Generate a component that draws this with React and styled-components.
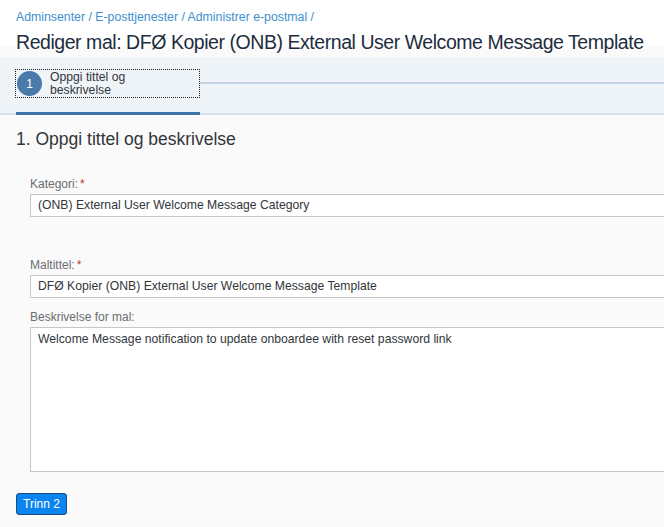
import React from 'react';
import styled, { createGlobalStyle } from 'styled-components';

const GlobalStyle = createGlobalStyle`
  html, body {
    margin: 0;
    padding: 0;
    background: #fafafa;
    font-family: "Liberation Sans", Arial, sans-serif;
    overflow: hidden;
  }
`;

const Page = styled.div`
  width: 664px;
  height: 527px;
  background: #fafafa;
  overflow: hidden;
`;

const Header = styled.header`
  background: #ffffff;
  padding: 10px 0 0 16px;
  height: 47px;
  box-sizing: border-box;
`;

const Breadcrumb = styled.div`
  font-size: 12.3px;
  line-height: 14px;
  color: #3d8fd0;
  white-space: nowrap;
`;

const Title = styled.h1`
  margin: 6px 0 0;
  font-size: 19.5px;
  letter-spacing: -0.45px;
  font-weight: normal;
  line-height: 24px;
  color: #1d2d3e;
  white-space: nowrap;
`;

const WizardBand = styled.div`
  background: #eff4f9;
  height: 58px;
  margin-top: 10px;
  position: relative;
  border-bottom: 2px solid #d4e1ee;
  box-sizing: border-box;
`;

const StepRow = styled.div`
  display: flex;
  align-items: center;
  padding: 12px 0 0 15px;
`;

const Step = styled.div`
  display: flex;
  align-items: center;
  gap: 8px;
  width: 185px;
  height: 29px;
  box-sizing: border-box;
  border: 1px dotted #222;
  padding-left: 1px;
`;

const Circle = styled.div`
  width: 25px;
  height: 25px;
  border-radius: 50%;
  background: #4a7aa9;
  color: #fff;
  font-size: 12px;
  display: flex;
  align-items: center;
  justify-content: center;
  flex-shrink: 0;
`;

const StepLabel = styled.div`
  font-size: 12.2px;
  line-height: 12.5px;
  color: #32363a;
`;

const Connector = styled.div`
  flex: 1;
  height: 2px;
  background: #c2d4e6;
  margin-top: -1px;
`;

const ActiveBar = styled.div`
  position: absolute;
  left: 16px;
  bottom: -2px;
  width: 184px;
  height: 3px;
  background: #3f73a8;
`;

const Content = styled.main`
  padding: 14px 0 0 16px;
`;

const SectionTitle = styled.h2`
  margin: 0;
  font-size: 17.5px;
  font-weight: normal;
  line-height: 20px;
  color: #32363a;
`;

const Form = styled.div`
  padding: 28px 0 0 30px;
`;

const Field = styled.div`
  margin-bottom: ${p => p.gap || 0}px;
`;

const Label = styled.label`
  display: block;
  font-size: 12px;
  line-height: 14px;
  color: #6a6d70;
  margin-bottom: 3px;
`;

const Req = styled.span`
  color: #b33b3b;
  margin-left: 2px;
`;

const Input = styled.div`
  width: 660px;
  height: 23px;
  box-sizing: border-box;
  background: #fff;
  border: 1px solid #c6c6c6;
  border-right: none;
  font-size: 12.2px;
  line-height: 21px;
  color: #32363a;
  padding-left: 7px;
  white-space: nowrap;
`;

const TextArea = styled(Input)`
  height: 145px;
  line-height: 14px;
  padding-top: 4px;
`;

const Button = styled.button`
  margin: 21px 0 0 16px;
  width: 51px;
  height: 22px;
  box-sizing: border-box;
  background: #0a84f0;
  border: 1px solid #1c4c7d;
  border-radius: 3px;
  color: #fff;
  font-family: inherit;
  font-size: 12px;
  padding: 0;
`;

export default function App() {
  return (
    <Page>
      <GlobalStyle />
      <Header>
        <Breadcrumb>Adminsenter / E-posttjenester / Administrer e-postmal /</Breadcrumb>
        <Title>Rediger mal: DFØ Kopier (ONB) External User Welcome Message Template</Title>
      </Header>
      <WizardBand>
        <StepRow>
          <Step>
            <Circle>1</Circle>
            <StepLabel>Oppgi tittel og<br />beskrivelse</StepLabel>
          </Step>
          <Connector />
        </StepRow>
        <ActiveBar />
      </WizardBand>
      <Content>
        <SectionTitle>1. Oppgi tittel og beskrivelse</SectionTitle>
      </Content>
      <Form>
        <Field gap={41}>
          <Label>Kategori:<Req>*</Req></Label>
          <Input>(ONB) External User Welcome Message Category</Input>
        </Field>
        <Field gap={12}>
          <Label>Maltittel:<Req>*</Req></Label>
          <Input>DFØ Kopier (ONB) External User Welcome Message Template</Input>
        </Field>
        <Field>
          <Label>Beskrivelse for mal:</Label>
          <TextArea>Welcome Message notification to update onboardee with reset password link</TextArea>
        </Field>
      </Form>
      <Button>Trinn 2</Button>
    </Page>
  );
}
